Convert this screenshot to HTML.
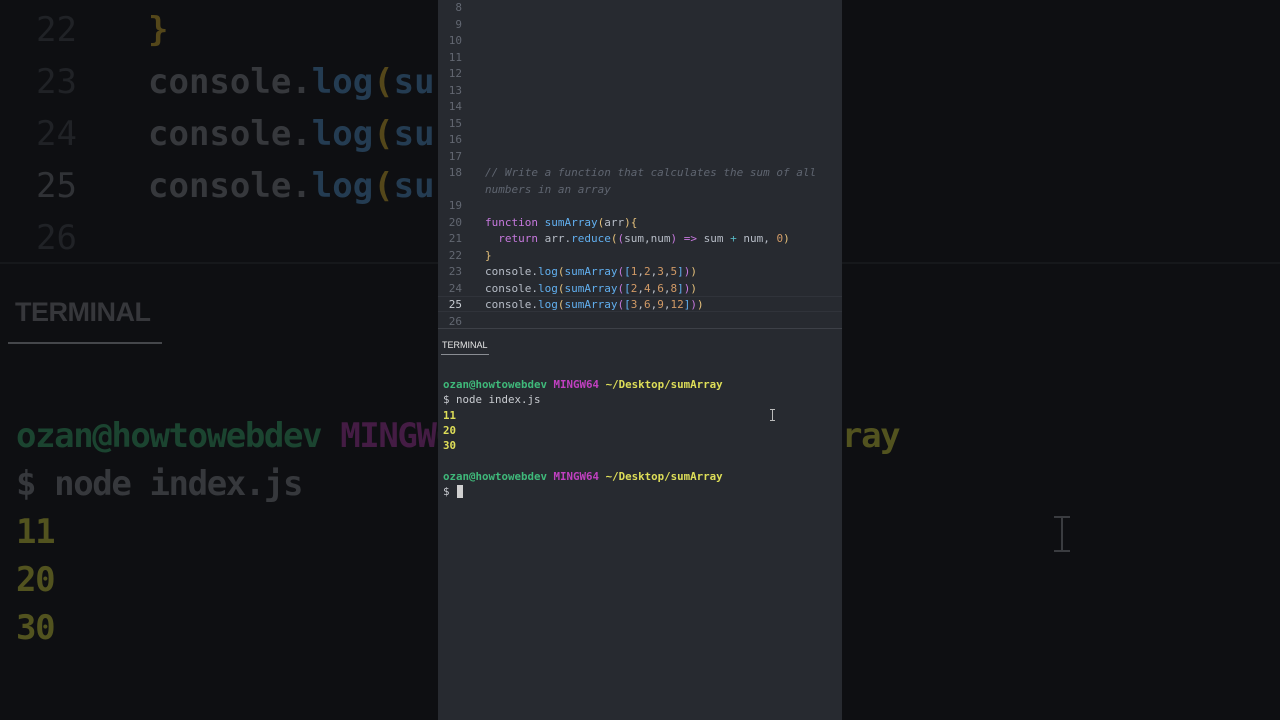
<!DOCTYPE html>
<html><head><meta charset="utf-8"><style>
*{margin:0;padding:0;box-sizing:border-box}
body{width:1280px;height:720px;overflow:hidden;background:#0e0f12;position:relative;font-family:"DejaVu Sans Mono","Liberation Mono",monospace}
.bg{position:absolute;white-space:pre;font-weight:bold}
.panel{position:absolute;left:438px;top:0;width:404px;height:720px;background:#272a30;overflow:hidden}
.ln{position:absolute;left:0;width:24px;text-align:right;font-size:11px;color:#626771;white-space:pre}
.cd{position:absolute;left:47px;font-size:11px;color:#b6bcc6;white-space:pre}
.t{position:absolute;left:5px;font-size:10.8px;white-space:pre}
.k{color:#c678dd}.f{color:#61afef}.p{color:#e5c07b}.n{color:#d19a66}.b{color:#c678dd}.c{color:#5f6570;font-style:italic}.o{color:#56b6c2}
.g{color:#3fb97a;font-weight:bold}.m{color:#c040c0;font-weight:bold}.y{color:#dede58;font-weight:bold}
</style></head><body>
<div style="position:absolute;left:0;top:262px;width:1280px;height:2px;background:#16181b"></div>
<div class="bg" style="left:36px;top:4px;font-size:34px;line-height:52px;color:#202226;font-weight:normal">22
23
24
<span style="color:#303236">25</span>
26</div>
<div class="bg" style="left:148px;top:4px;font-size:34px;line-height:52px;color:#36383c"><span style="color:#54471a">}</span>
console.<span style="color:#243c52">log</span><span style="color:#54471a">(</span><span style="color:#243c52">su</span>
console.<span style="color:#243c52">log</span><span style="color:#54471a">(</span><span style="color:#243c52">su</span>
console.<span style="color:#243c52">log</span><span style="color:#54471a">(</span><span style="color:#243c52">su</span></div>
<div class="bg" style="left:15px;top:297px;font-size:27px;font-family:'Liberation Sans',sans-serif;color:#36373b;letter-spacing:-0.5px">TERMINAL</div>
<div style="position:absolute;left:8px;top:342px;width:154px;height:2px;background:#45474b"></div>
<div class="bg" style="left:16px;top:412px;font-size:34px;line-height:48px;color:#36383c;letter-spacing:-1.4px"><span style="color:#1b4430">ozan@howtowebdev</span> <span style="color:#441c44">MINGW64</span>
$ node index.js
<span style="color:#52531f">11</span>
<span style="color:#52531f">20</span>
<span style="color:#52531f">30</span></div>
<div class="bg" style="left:842px;top:412px;font-size:34px;line-height:48px;color:#52531f;letter-spacing:-1.4px">ray</div>
<div style="position:absolute;left:1061px;top:517px;width:2px;height:34px;background:#3a3c40"></div>
<div style="position:absolute;left:1054px;top:516px;width:16px;height:2px;background:#3a3c40"></div>
<div style="position:absolute;left:1054px;top:550px;width:16px;height:2px;background:#3a3c40"></div>

<div class="panel">
<div class="ln" style="top:0;line-height:16.5px">8
9
10
11
12
13
14
15
16
17
18

19
20
21
22
23
24
<span style="color:#c8ccd2">25</span>
26</div>
<div style="position:absolute;left:0;top:296px;width:404px;height:16px;border-top:1px solid #30333a;border-bottom:1px solid #30333a"></div>
<div class="cd" style="top:165px;line-height:16.5px"><span class="c">// Write a function that calculates the sum of all
numbers in an array</span>

<span class="k">function</span> <span class="f">sumArray</span><span class="p">(</span>arr<span class="p">){</span>
  <span class="k">return</span> arr.<span class="f">reduce</span><span class="p">(</span><span class="b">(</span>sum,num<span class="b">)</span> <span class="k">=&gt;</span> sum <span class="o">+</span> num, <span class="n">0</span><span class="p">)</span>
<span class="p">}</span>
console.<span class="f">log</span><span class="p">(</span><span class="f">sumArray</span><span class="b">(</span><span class="f">[</span><span class="n">1</span>,<span class="n">2</span>,<span class="n">3</span>,<span class="n">5</span><span class="f">]</span><span class="b">)</span><span class="p">)</span>
console.<span class="f">log</span><span class="p">(</span><span class="f">sumArray</span><span class="b">(</span><span class="f">[</span><span class="n">2</span>,<span class="n">4</span>,<span class="n">6</span>,<span class="n">8</span><span class="f">]</span><span class="b">)</span><span class="p">)</span>
console.<span class="f">log</span><span class="p">(</span><span class="f">sumArray</span><span class="b">(</span><span class="f">[</span><span class="n">3</span>,<span class="n">6</span>,<span class="n">9</span>,<span class="n">12</span><span class="f">]</span><span class="b">)</span><span class="p">)</span>
</div>
<div style="position:absolute;left:0;top:328px;width:404px;height:1px;background:#3d4047"></div>
<div style="position:absolute;left:4px;top:340px;font-size:9px;font-family:'Liberation Sans',sans-serif;color:#e6e6e6">TERMINAL</div>
<div style="position:absolute;left:3px;top:354px;width:48px;height:1px;background:#8a8d93"></div>
<div class="t" style="top:377px;line-height:15.3px;color:#c9ccd1"><span class="g">ozan@howtowebdev</span> <span class="m">MINGW64</span> <span class="y">~/Desktop/sumArray</span>
$ node index.js
<span class="y">11</span>
<span class="y">20</span>
<span class="y">30</span>

<span class="g">ozan@howtowebdev</span> <span class="m">MINGW64</span> <span class="y">~/Desktop/sumArray</span>
$ </div>
<div style="position:absolute;left:19px;top:485px;width:6px;height:13px;background:#d0d0d0"></div>
<div style="position:absolute;left:334px;top:409px;width:1px;height:12px;background:#bbb"></div>
<div style="position:absolute;left:332px;top:409px;width:5px;height:1px;background:#bbb"></div>
<div style="position:absolute;left:332px;top:420px;width:5px;height:1px;background:#bbb"></div>
</div>
</body></html>
